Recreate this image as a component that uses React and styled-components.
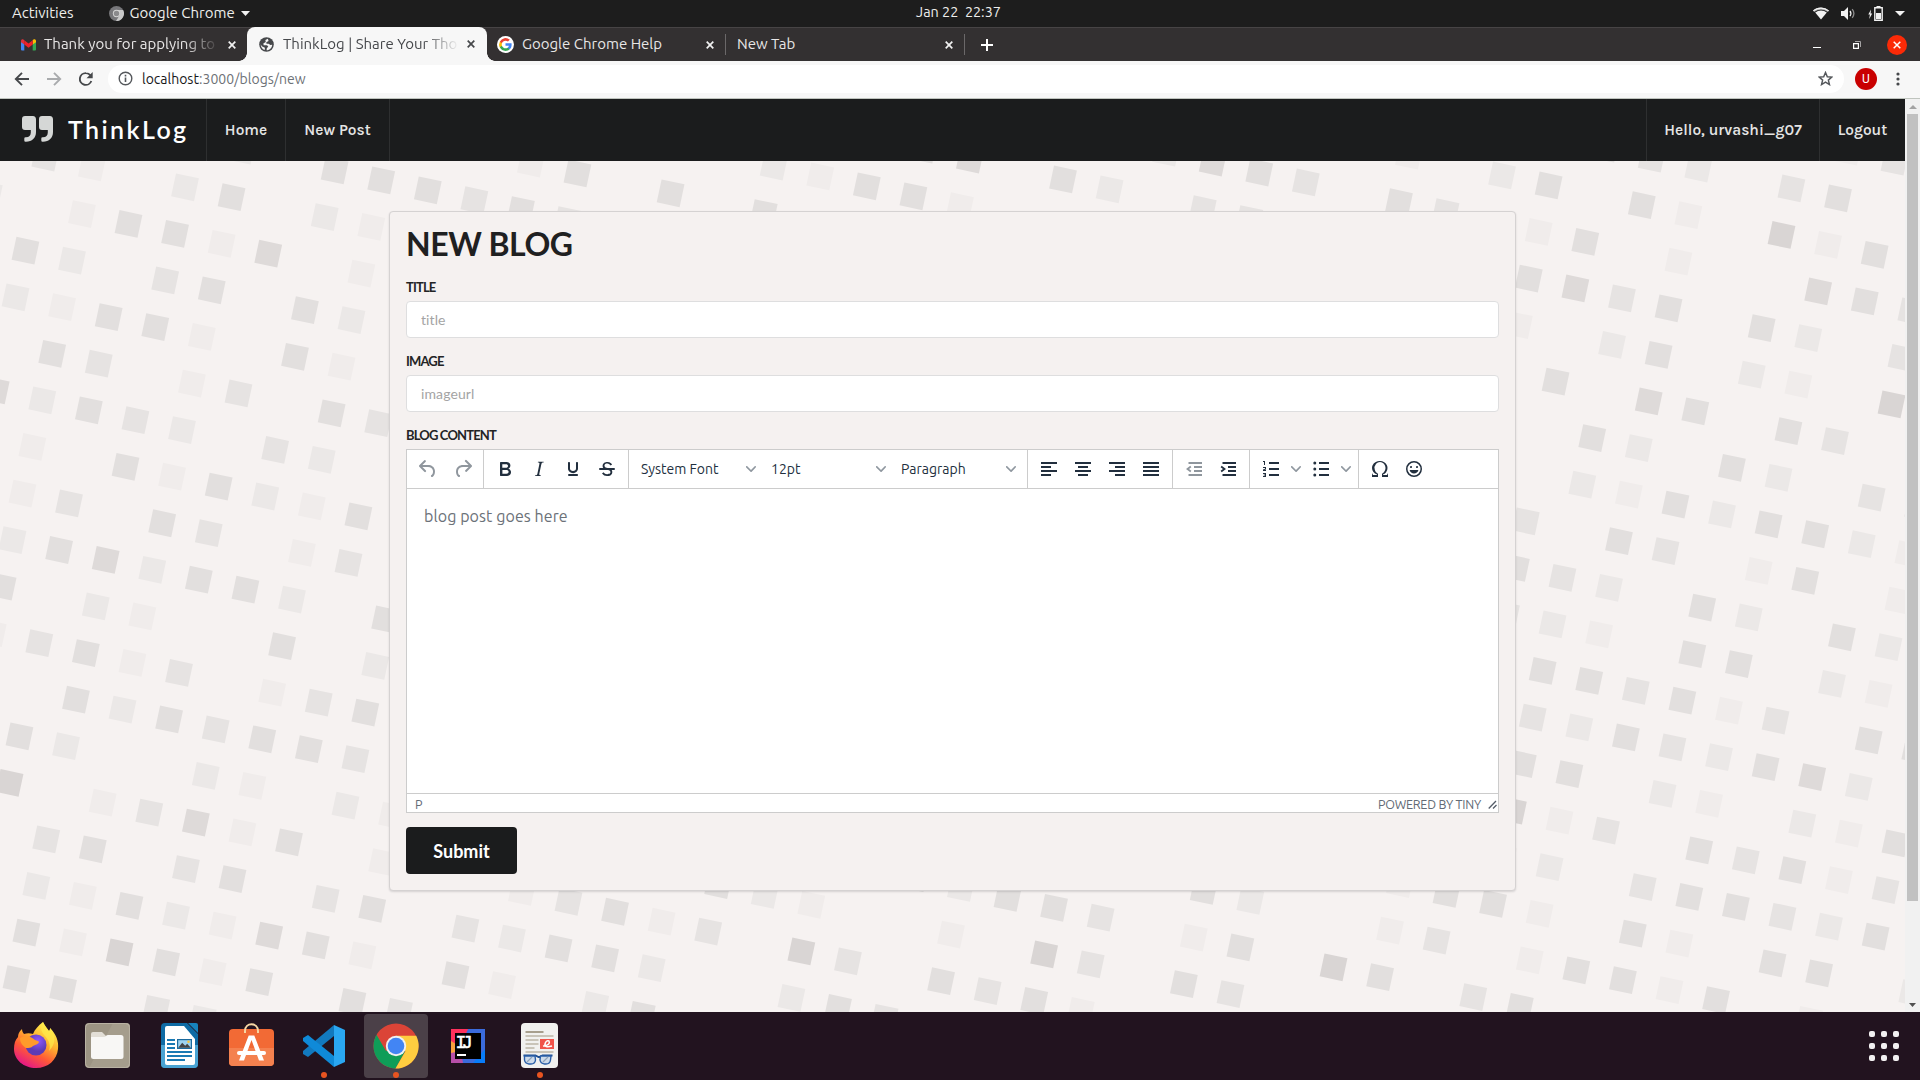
import React from "react";
import styled, { createGlobalStyle } from "styled-components";

const UI = `Ubuntu, "Noto Sans", "Open Sans", sans-serif`;
const LATO = `Lato, "Open Sans", sans-serif`;
const GROTESK = `Karla, Inter, "Liberation Sans", sans-serif`;

const GlobalStyle = createGlobalStyle`
  *, *::before, *::after { box-sizing: border-box; }
  html, body { margin: 0; padding: 0; overflow: hidden; }
  body { background: #f6f2f1; font-family: ${LATO}; }
`;

const Screen = styled.div`
  width: 1920px;
  height: 1080px;
  display: flex;
  flex-direction: column;
  overflow: hidden;
`;

const Label = styled.span`
  font-family: ${(p) => p.$font || UI};
  font-size: ${(p) => p.$size || 14}px;
  font-weight: ${(p) => p.$weight || 400};
  letter-spacing: ${(p) => p.$track || 0}px;
  color: ${(p) => p.$color || "inherit"};
  padding-bottom: ${(p) => p.$lift || 0}px;
  line-height: 1.2;
  white-space: pre;
`;

/* ---------- desktop top bar ---------- */
const TopBar = styled.header`
  height: 27px;
  flex: none;
  background: #1d1d1d;
  color: #eeeeec;
  display: grid;
  grid-template-columns: 1fr auto 1fr;
  align-items: center;
  padding: 0 15px 0 12px;
`;
const TopGroup = styled.div`
  display: flex;
  align-items: center;
  justify-content: ${(p) => (p.$end ? "flex-end" : "flex-start")};
`;
const AppMenu = styled.div`
  display: flex;
  align-items: center;
  margin-left: 35px;
  gap: 6px;
`;
const Tray = styled.div`
  display: flex;
  align-items: center;
  gap: 12px;
`;

/* ---------- browser chrome ---------- */
const TabStrip = styled.div`
  height: 34px;
  flex: none;
  background: #333031;
  border-top: 1px solid #474445;
  display: flex;
  align-items: stretch;
`;
const Tab = styled.div`
  width: ${(p) => p.$width}px;
  padding: 0 ${(p) => p.$right}px 0 ${(p) => p.$left}px;
  display: flex;
  align-items: center;
  color: ${(p) => (p.$active ? "#46484b" : "#e8e6e6")};
  background: ${(p) => (p.$active ? "#f7f7f7" : "transparent")};
  border-radius: 8px 8px 0 0;
  margin-top: ${(p) => (p.$active ? "-1px" : "0")};
  position: relative;
  ${(p) =>
    p.$active &&
    `
    &::before, &::after {
      content: ""; position: absolute; bottom: 0; width: 8px; height: 8px;
    }
    &::before { left: -8px; background: radial-gradient(circle at 0 0, transparent 7.5px, #f7f7f7 8px); }
    &::after { right: -8px; background: radial-gradient(circle at 100% 0, transparent 7.5px, #f7f7f7 8px); }
  `}
`;
const TabTitle = styled.div`
  flex: 1;
  min-width: 0;
  margin-left: ${(p) => p.$gap ?? 8}px;
  margin-right: 8px;
  padding-bottom: ${(p) => p.$lift ?? 2}px;
  display: flex;
  ${(p) => p.$fade && "mask-image: linear-gradient(90deg, #000 calc(100% - 36px), transparent);"}
`;
const Divider = styled.div`
  width: 1px;
  height: 21px;
  align-self: center;
  background: #6b6869;
`;
const NewTab = styled.div`
  width: 44px;
  display: flex;
  align-items: center;
  justify-content: center;
`;
const WindowButtons = styled.div`
  margin-left: auto;
  display: flex;
  align-items: center;
  gap: 32px;
  padding-right: 13px;
`;
const CloseButton = styled.div`
  width: 20px;
  height: 20px;
  border-radius: 50%;
  background: #fb2a07;
  display: flex;
  align-items: center;
  justify-content: center;
  margin-left: -6px;
`;
const Toolbar = styled.div`
  height: 38px;
  flex: none;
  background: #f7f7f7;
  border-bottom: 1px solid #bfc4be;
  display: flex;
  align-items: center;
  padding: 0 20px 1px 14px;
`;
const NavIcons = styled.div`
  display: flex;
  align-items: center;
  gap: 16px;
  width: 94px;
`;
const Omnibox = styled.div`
  flex: 1;
  height: 28px;
  margin-top: -1px;
  border-radius: 14px;
  background: #fff;
  display: flex;
  align-items: center;
  padding: 0 11px 0 10px;
`;
const Url = styled.div`
  margin-left: 9px;
  padding-top: 2px;
  flex: 1;
  display: flex;
`;
const Avatar = styled.div`
  width: 22px;
  height: 22px;
  border-radius: 50%;
  background: #c90000;
  margin: 0 19px 0 11px;
  display: flex;
  align-items: center;
  justify-content: center;
`;

/* ---------- page ---------- */
const Viewport = styled.div`
  height: 913px;
  flex: none;
  display: flex;
`;
const Page = styled.main`
  flex: 1;
  position: relative;
  background: #f6f2f1;
  overflow: hidden;
  display: flex;
  flex-direction: column;
`;
const Backdrop = styled.svg`
  position: absolute;
  left: 0;
  top: 0;
`;
const NavBar = styled.nav`
  height: 62px;
  flex: none;
  background: #1b1c1d;
  position: relative;
  display: flex;
  color: #e4e4e4;
`;
const NavItem = styled.a`
  width: ${(p) => p.$width}px;
  border-right: ${(p) => (p.$last ? "0" : "1px solid #2e2f30")};
  border-left: ${(p) => (p.$first ? "1px solid #2e2f30" : "0")};
  display: flex;
  align-items: center;
  justify-content: ${(p) => (p.$brand ? "flex-start" : "center")};
  padding: ${(p) => (p.$brand ? "0 0 2px 22px" : "0")};
  gap: 15px;
`;
const NavSpace = styled.div`
  flex: 1;
`;
const Card = styled.section`
  position: relative;
  width: 1127px;
  height: 680px;
  margin: 50px 0 0 389px;
  padding: 15px 16px 16px;
  background: #f5f1f0;
  border: 1px solid #d5d2d2;
  border-radius: 4px;
  box-shadow: 0 1px 2px 0 rgba(34, 36, 38, 0.15);
  display: flex;
  flex-direction: column;
`;
const Heading = styled.h1`
  margin: 0;
  height: 50px;
  flex: none;
  font: 700 32px/34px ${LATO};
  letter-spacing: -0.45px;
  color: #1f2021;
`;
const Field = styled.div`
  height: 74px;
  flex: none;
  display: flex;
  flex-direction: column;
`;
const FieldName = styled.label`
  height: 24px;
  flex: none;
  padding-top: 2px;
  font: 700 13px/17px ${LATO};
  letter-spacing: -0.85px;
  color: #232425;
  text-transform: uppercase;
`;
const Input = styled.input`
  height: 37px;
  width: 100%;
  border: 1px solid #dededf;
  border-radius: 4px;
  background: #fff;
  padding: 0 14px;
  font: 400 14px/17px ${LATO};
  letter-spacing: 0.1px;
  outline: none;
  &::placeholder { color: #a4a4a4; opacity: 1; }
`;
const Editor = styled.div`
  height: 364px;
  flex: none;
  border: 1px solid #ccc;
  background: #fff;
  display: flex;
  flex-direction: column;
  color: #222f3e;
`;
const EditorTools = styled.div`
  height: 39px;
  flex: none;
  display: flex;
  border-bottom: 1px solid #ccc;
`;
const ToolGroup = styled.div`
  width: ${(p) => p.$width}px;
  border-right: ${(p) => (p.$last ? "0" : "1px solid #ccc")};
  display: flex;
  align-items: center;
  padding-left: ${(p) => p.$left ?? 4}px;
`;
const Tool = styled.div`
  width: ${(p) => p.$width || 34}px;
  height: 34px;
  display: flex;
  align-items: center;
  justify-content: center;
  opacity: ${(p) => (p.$off ? 0.5 : 1)};
`;
const Select = styled.div`
  width: 130px;
  padding: 0 7px 0 8px;
  display: flex;
  align-items: center;
  justify-content: space-between;
`;
const EditorBody = styled.div`
  flex: 1;
  padding: 17px 17px;
`;
const StatusBar = styled.div`
  height: 19px;
  flex: none;
  border-top: 1px solid #ccc;
  display: flex;
  align-items: center;
  justify-content: space-between;
  padding: 2px 1px 0 8px;
  color: #626a75;
`;
const StatusEnd = styled.div`
  display: flex;
  align-items: center;
  gap: 7px;
`;
const SubmitButton = styled.button`
  width: 111px;
  height: 47px;
  margin-top: 14px;
  padding: 1px 0 0;
  border: 0;
  border-radius: 4px;
  background: #1b1c1d;
  color: #fff;
  font: 700 18px/20px ${LATO};
`;
const ScrollTrack = styled.div`
  width: 15px;
  background: #f1f1f1;
  display: flex;
  flex-direction: column;
  align-items: center;
  justify-content: space-between;
`;
const ScrollThumb = styled.div`
  width: 11px;
  height: 787px;
  margin: 0 0 auto;
  background: #c1c1c1;
`;
const ScrollArrow = styled.div`
  height: 15px;
  display: flex;
  align-items: center;
`;

/* ---------- dock ---------- */
const Dock = styled.footer`
  height: 68px;
  flex: none;
  background: #22131f;
  display: flex;
  align-items: center;
  justify-content: space-between;
  padding-right: 21px;
`;
const DockApps = styled.div`
  display: flex;
`;
const DockItem = styled.div`
  width: 72px;
  height: 68px;
  display: flex;
  align-items: center;
  justify-content: center;
  position: relative;
  &::after {
    content: "";
    display: ${(p) => (p.$running ? "block" : "none")};
    position: absolute;
    left: 33px;
    top: 60px;
    width: 6px;
    height: 6px;
    border-radius: 50%;
    background: #e95420;
  }
`;
const DockTile = styled.div`
  width: 64px;
  height: 64px;
  padding: 0 1px 1px 0;
  border-radius: 4px;
  background: ${(p) => (p.$focused ? "#4b4048" : "transparent")};
  display: flex;
  align-items: center;
  justify-content: center;
`;
const AppGrid = styled.div`
  display: grid;
  grid-template-columns: repeat(3, 6px);
  gap: 6px;
`;
const AppDot = styled.i`
  height: 6px;
  border-radius: 2px;
  background: #f2f0f1;
`;

/* ---------- backdrop of rotated squares ---------- */
// row -> column -> shade, where 1 is the faintest square and 6 the darkest
const CELLS = {
  "-8": { 34: 1, 35: 3 },
  "-7": { 29: 4, 30: 3, 31: 2, 33: 3, 34: 4 },
  "-6": { 25: 1, 27: 2, 28: 4, 30: 4, 31: 1, 33: 6, 34: 1, 35: 4 },
  "-5": { 20: 2, 21: 5, 22: 4, 23: 3, 25: 4, 26: 3, 28: 1, 29: 4, 31: 1, 34: 5, 35: 4, 36: 3 },
  "-4": { 15: 4, 16: 5, 18: 4, 19: 2, 21: 3, 22: 3, 28: 4, 29: 5, 30: 3, 31: 4, 33: 4, 34: 2, 36: 3 },
  "-3": { 12: 2, 13: 1, 14: 4, 15: 4, 16: 1, 28: 1, 30: 2, 31: 4, 33: 2, 34: 1, 36: 6 },
  "-2": { 7: 1, 8: 4, 10: 4, 12: 4, 29: 4, 31: 5, 32: 4, 34: 4, 35: 3 },
  "-1": { 1: 2, 3: 4, 4: 4, 5: 4, 6: 3, 7: 4, 8: 3, 30: 4, 31: 2, 33: 4, 34: 2, 36: 3, 37: 4 },
  0: { "-3": 3, "-2": 1, 0: 2, 1: 4, 3: 2, 4: 1, 30: 2, 31: 1, 32: 4, 33: 2, 34: 4, 35: 4, 36: 2, 37: 1 },
  1: { "-4": 2, "-2": 1, "-1": 4, 0: 4, 1: 1, 2: 5, 4: 1, 29: 3, 31: 4, 32: 3, 34: 1, 35: 4, 37: 1 },
  2: { "-3": 4, "-2": 2, 0: 3, 1: 4, 3: 4, 4: 2, 29: 4, 30: 3, 31: 2, 33: 4, 34: 2, 36: 4, 37: 2 },
  3: { "-3": 2, "-2": 1, "-1": 4, 0: 4, 1: 1, 3: 4, 4: 1, 29: 3, 30: 2, 31: 1, 33: 4, 34: 4, 36: 2, 37: 1 },
  4: { "-2": 4, "-1": 3, 1: 1, 2: 3, 4: 4, 5: 3, 30: 4, 31: 4, 32: 3, 33: 4, 34: 1, 35: 3, 37: 4, 38: 4 },
  5: { "-3": 5, "-2": 2, "-1": 4, 0: 3, 1: 2, 3: 3, 4: 2, 30: 3, 31: 2, 32: 4, 33: 3, 34: 2, 35: 4, 36: 5, 37: 2 },
  6: { "-2": 1, 0: 4, 1: 1, 2: 4, 3: 2, 4: 1, 5: 4, 30: 4, 31: 4, 33: 2, 34: 1, 36: 2, 37: 1, 38: 4 },
  7: { "-2": 1, "-1": 3, 1: 4, 2: 3, 4: 1, 5: 3, 30: 6, 31: 1, 32: 3, 34: 4, 35: 3, 36: 4, 37: 1, 38: 3 },
  8: { "-2": 2, "-1": 4, 0: 5, 1: 2, 2: 4, 3: 4, 4: 2, 6: 4, 30: 1, 31: 2, 33: 3, 34: 4, 35: 4, 36: 3, 37: 2, 38: 4 },
  9: { "-2": 4, 0: 2, 1: 1, 4: 4, 6: 2, 28: 1, 29: 4, 30: 4, 31: 1, 33: 4, 34: 1, 36: 4, 37: 4, 39: 2 },
  10: { "-2": 1, "-1": 3, 0: 4, 1: 1, 2: 3, 4: 1, 5: 3, 6: 4, 24: 4, 25: 2, 28: 1, 29: 3, 31: 1, 32: 4, 33: 4, 34: 1, 35: 4, 37: 1 },
  11: { 0: 4, 1: 2, 2: 4, 3: 3, 4: 4, 5: 4, 6: 3, 18: 4, 19: 2, 20: 4, 21: 4, 22: 3, 24: 1, 25: 4, 27: 6, 28: 4, 30: 3, 31: 4 },
  12: { "-1": 4, 0: 2, 3: 2, 4: 1, 6: 2, 7: 1, 14: 4, 15: 2, 16: 1, 19: 1, 21: 6, 22: 3, 24: 4, 25: 3 },
  13: { "-1": 6, 1: 1, 2: 3, 3: 5, 4: 1, 5: 4, 7: 1, 10: 1, 11: 3, 12: 4, 13: 1, 14: 3, 16: 6, 17: 3, 19: 4, 20: 3, 21: 4, 22: 1 },
  14: { 0: 3, 1: 4, 3: 3, 4: 4, 6: 3, 7: 4, 9: 3, 10: 2, 11: 4, 12: 4, 13: 2, 16: 2, 17: 4, 18: 3 },
  15: { 0: 2, 1: 1, 2: 4, 3: 2, 4: 1, 5: 5, 6: 4, 7: 1, 9: 4, 10: 1, 12: 2, 13: 4 },
  16: { 0: 4, 1: 1, 2: 6, 3: 4, 4: 1, 5: 4, 7: 4, 8: 3 },
  17: { 0: 4, 1: 4, 3: 3, 4: 2 },
};
const SHADES = ["", "#f0eceb", "#ebe8e7", "#e6e3e2", "#e2dfde", "#dedad9", "#d9d5d4"];
const STEP = 47.62;
const SIDE = 23.4;

function Squares() {
  const out = [];
  for (const j of Object.keys(CELLS)) {
    for (const i of Object.keys(CELLS[j])) {
      out.push(
        <rect key={i + "," + j} x={i * STEP - SIDE / 2} y={j * STEP - SIDE / 2} width={SIDE} height={SIDE} fill={SHADES[CELLS[j][i]]} />
      );
    }
  }
  return (
    <Backdrop width="1905" height="913" viewBox="0 99 1905 913">
      <g transform="translate(185 187.3) rotate(12.015)">{out}</g>
    </Backdrop>
  );
}

/* ---------- icons ---------- */
const TINY = {
  undo: "M6.4 8H12c3.7 0 6.2 2 6.8 5.1.6 2.7-.4 5.6-2.3 6.8a1 1 0 01-1-1.8c1.1-.6 1.8-2.7 1.4-4.6-.5-2.1-2.1-3.5-4.9-3.5H6.4l3.3 3.3a1 1 0 11-1.4 1.4l-5-5a1 1 0 010-1.4l5-5a1 1 0 011.4 1.4L6.4 8z",
  redo: "M17.6 10H12c-2.8 0-4.4 1.4-4.9 3.5-.4 2 .3 4 1.4 4.6a1 1 0 11-1 1.8c-2-1.2-2.9-4.1-2.3-6.8.6-3 3-5.1 6.8-5.1h5.6l-3.3-3.3a1 1 0 111.4-1.4l5 5a1 1 0 010 1.4l-5 5a1 1 0 01-1.4-1.4l3.3-3.3z",
  bold: "M7.8 19c-.3 0-.5 0-.6-.2l-.2-.5V5.7c0-.2 0-.4.2-.5l.6-.2h5c1.5 0 2.7.3 3.5 1 .7.6 1.1 1.4 1.1 2.5a3 3 0 01-.6 1.9c-.4.6-1 1-1.6 1.2.4.1.9.3 1.3.6s.8.7 1 1.2c.4.4.5 1 .5 1.6 0 1.3-.4 2.3-1.3 3-.8.7-2.1 1-3.8 1H7.8zm5-8.3c.6 0 1.2-.1 1.6-.5.4-.3.6-.7.6-1.3 0-1.1-.8-1.7-2.3-1.7H9.3v3.5h3.4zm.5 6c.7 0 1.3-.1 1.7-.4.4-.4.6-.9.6-1.5s-.2-1-.7-1.4c-.4-.3-1-.4-2-.4H9.4v3.8h4z",
  italic: "M16.7 4.7l-.1.9h-.3c-.6 0-1 0-1.4.3-.3.3-.4.6-.5 1.1l-2.1 9.8v.6c0 .5.4.8 1.4.8h.2l-.2.8H8l.2-.8h.2c1.1 0 1.8-.5 2-1.5l2-9.8.1-.5c0-.6-.4-.8-1.4-.8h-.3l.2-.9h5.8z",
  underline: "M16 5c.6 0 1 .4 1 1v5.5a4 4 0 01-.4 1.8l-1 1.4a5.3 5.3 0 01-5.5 1 5 5 0 01-1.6-1c-.5-.4-.8-.9-1.1-1.4a4 4 0 01-.4-1.8V6c0-.6.4-1 1-1s1 .4 1 1v5.5c0 .3 0 .6.2 1l.6.7a3.3 3.3 0 002.2.8 3.4 3.4 0 002.2-.8c.3-.2.4-.5.6-.8l.2-.9V6c0-.6.4-1 1-1zM8 17h8c.6 0 1 .4 1 1s-.4 1-1 1H8a1 1 0 010-2z",
  strike: "M15.6 8.5c-.5-.7-1-1.1-1.3-1.3-.6-.4-1.3-.6-2-.6-2.7 0-2.8 1.7-2.8 2.1 0 1.6 1.8 2 3.2 2.3 4.4.9 4.6 2.8 4.6 3.9 0 1.4-.7 4.1-5 4.1A6.2 6.2 0 017 16.4l1.5-1.1c.4.6 1.6 2 3.7 2 1.6 0 2.5-.4 3-1.2.4-.8.3-2-.8-2.6-.7-.4-1.6-.7-2.9-1-1-.2-3.9-.8-3.9-3.6C7.6 6 10.3 5 12.4 5c2.9 0 4.2 1.6 4.7 2.4l-1.5 1.1zM5 11h14a1 1 0 010 2H5a1 1 0 010-2z",
  left: "M4 5h16v2H4zM4 9h10v2H4zM4 13h16v2H4zM4 17h10v2H4z",
  center: "M4 5h16v2H4zM7 9h10v2H7zM4 13h16v2H4zM7 17h10v2H7z",
  right: "M4 5h16v2H4zM10 9h10v2H10zM4 13h16v2H4zM10 17h10v2H10z",
  justify: "M4 5h16v2H4zM4 9h16v2H4zM4 13h16v2H4zM4 17h16v2H4z",
  outdent: "M6.5 5H20v2H6.5zM12 9h8v2h-8zM12 13h8v2h-8zM6.5 17H20v2H6.5zM9.4 10.2L7 12l2.4 1.8-1.1 1.5L4 12l4.3-3.3z",
  indent: "M6.5 5H20v2H6.5zM12 9h8v2h-8zM12 13h8v2h-8zM6.5 17H20v2H6.5zM4.6 13.8L7 12l-2.4-1.8 1.1-1.5L10 12l-4.3 3.3z",
  ul: "M10 5h10v2H10zM10 11h10v2H10zM10 17h10v2H10zM4.3 6a1.5 1.5 0 103 0 1.5 1.5 0 10-3 0zM4.3 12a1.5 1.5 0 103 0 1.5 1.5 0 10-3 0zM4.3 18a1.5 1.5 0 103 0 1.5 1.5 0 10-3 0z",
  ol: "M10 5h10v2H10zM10 11h10v2H10zM10 17h10v2H10zM6 4v4H5V5H4V4zM4 10h3v2.5l-1.7.6H7v.9H4v-1.6l2-.7V11H4zM4 16h3v4H4v-1h2v-.6H4.7v-.8H6V17H4z",
  omega: "M15 18h4l1-2v4h-6v-3.3l1.4-1a6 6 0 001.8-2.9 6.3 6.3 0 00-.1-4.1 5.8 5.8 0 00-3-3.2c-.6-.3-1.3-.5-2.1-.5a5.1 5.1 0 00-3.9 1.8 6.3 6.3 0 00-1.3 6 6.2 6.2 0 001.8 3l1.4.9V20H4v-4l1 2h4v-.5l-2-1L5.4 15A6.5 6.5 0 014 11c0-1 .2-1.9.6-2.7A7 7 0 017.8 5 7.9 7.9 0 0112 4c1.5.1 3 .5 4.2 1.2a7 7 0 012.7 3.1c.4.8.6 1.7.6 2.7a6.5 6.5 0 01-1.4 4.2L17 16.5l-2 1v.5z",
  emoji: "M9 11c.6 0 1-.4 1-1s-.4-1-1-1a1 1 0 00-1 1c0 .6.4 1 1 1zm6 0c.6 0 1-.4 1-1s-.4-1-1-1a1 1 0 00-1 1c0 .6.4 1 1 1zm-3 5.5c2.1 0 4-1.5 4.4-3.5H7.6c.5 2 2.3 3.5 4.4 3.5zM12 4a8 8 0 100 16 8 8 0 000-16zm0 14.5a6.5 6.5 0 110-13 6.5 6.5 0 010 13z",
};
const TinyIcon = ({ name }) => (
  <svg width="24" height="24" viewBox="0 0 24 24">
    <path d={TINY[name]} fill="#222f3e" fillRule={name === "strike" ? "nonzero" : "evenodd"} />
  </svg>
);
const Chevron = () => (
  <svg width="10" height="10" viewBox="0 0 10 10">
    <path d="M8.7 2.2c.3-.3.8-.3 1 0 .4.4.4.9 0 1.2L5.7 7.8c-.3.3-.9.3-1.2 0L.2 3.4a.8.8 0 010-1.2c.3-.3.8-.3 1.1 0L5 6l3.7-3.8z" fill="#8f979f" />
  </svg>
);
const Caret = ({ w = 9, h = 5, color = "#f2f2f2", up }) => (
  <svg width={w} height={h} viewBox="0 0 10 5" preserveAspectRatio="none">
    <path d={up ? "M0 5h10L5 0z" : "M0 0h10L5 5z"} fill={color} />
  </svg>
);
const Cross = ({ color, size = 8, w = 1.7 }) => (
  <svg width={size} height={size} viewBox="0 0 8 8">
    <path d="M.7.7l6.6 6.6M7.3.7L.7 7.3" stroke={color} strokeWidth={w} />
  </svg>
);
const MiniChrome = () => (
  <svg width="15" height="15" viewBox="-8 -8 16 16">
    <circle r="8" fill="#77777a" />
    <path d="M0-3.8h7A8 8 0 01-.5 8L3.3 1.9z" fill="#c9c9c9" />
    <circle r="3.9" fill="#d6d6d6" />
    <circle r="2.9" fill="#8a8a8c" />
  </svg>
);
const Gmail = () => (
  <svg width="15" height="12" viewBox="0 0 15 12">
    <path d="M0 2.2V10.5A1 1 0 001 11.5H3.3V5z" fill="#4285f4" />
    <path d="M15 2.2V10.5A1 1 0 0114 11.5H11.7V5z" fill="#34a853" />
    <path d="M11.7 1.4V5.5L15 3.2V2C15 .3 13-.3 11.7 1z" fill="#fbbc04" />
    <path d="M3.3 1.2L7.5 4.4 11.7 1.2V5.5L7.5 8.7 3.3 5.5z" fill="#f0202a" />
    <path d="M0 2C0 .3 2-.3 3.3 1.2V5.5L0 3.2z" fill="#e0303a" />
  </svg>
);
const Globe = () => (
  <svg width="15" height="15" viewBox="0 0 16 16">
    <circle cx="8" cy="8" r="7.8" fill="#46484b" />
    <path d="M9.5 1.8L6.8 3.2l.4 2L4.6 6.8 5 8.7h3.6l1.3 1.6-1.5 1.3-.3 2.6c3.5-.2 5.9-2.8 6-6l-2 .3-1.8-1.2-2.3-.2-.2-1.6 2.4-1.3zM1.8 7.6c0 3 1.6 5.2 4.3 6.2l.2-2.3L3 9.8z" fill="#f7f7f7" />
  </svg>
);
const GoogleG = () => (
  <svg width="17" height="17" viewBox="-3 -3 24 24">
    <circle cx="9" cy="9" r="12" fill="#fff" />
    <path d="M17.64 9.2c0-.64-.06-1.25-.16-1.84H9v3.48h4.84a4.14 4.14 0 01-1.8 2.72v2.26h2.92c1.7-1.57 2.68-3.88 2.68-6.62z" fill="#4285f4" />
    <path d="M9 18c2.43 0 4.47-.8 5.96-2.18l-2.92-2.26c-.8.54-1.84.86-3.04.86-2.34 0-4.33-1.58-5.04-3.7H.96v2.33A9 9 0 009 18z" fill="#34a853" />
    <path d="M3.96 10.71a5.4 5.4 0 010-3.42V4.96H.96a9 9 0 000 8.08z" fill="#fbbc05" />
    <path d="M9 3.58c1.32 0 2.5.45 3.44 1.35l2.58-2.59A9 9 0 00.96 4.96l3 2.33C4.67 5.16 6.66 3.58 9 3.58z" fill="#ea4335" />
  </svg>
);
const Wifi = () => (
  <svg width="16" height="13" viewBox="0 0 16 13">
    <path d="M8 .6C5 .6 2.2 1.7 0 3.5l1.3 1.6a10.7 10.7 0 0113.4 0L16 3.5A12.6 12.6 0 008 .6z" fill="#a7a7a7" />
    <path d="M8 .6C5 .6 2.2 1.7 0 3.5l.7.8a11.6 11.6 0 0114.6 0l.7-.8A12.6 12.6 0 008 .6z" fill="#f2f2f2" />
    <path d="M8 12.6l5.8-7.1a9.3 9.3 0 00-11.6 0z" fill="#f2f2f2" />
  </svg>
);
const Volume = () => (
  <svg width="15" height="13" viewBox="0 0 15 13">
    <path d="M0 4h3l4-4v13L3 9H0z" fill="#f2f2f2" />
    <path d="M9 4q1.8 2.5 0 5" stroke="#f2f2f2" strokeWidth="1.3" fill="none" />
    <path d="M11.2 2.2q3.4 4.3 0 8.6" stroke="#8b8b8b" strokeWidth="1.3" fill="none" />
  </svg>
);
const Battery = () => (
  <svg width="15" height="15" viewBox="0 0 15 15">
    <path d="M3 3.5L.3 8.5h1.6L1.2 13 4.2 7.5H2.6z" fill="#f2f2f2" />
    <path d="M6.8 1.7h7.4v12.5H6.8z" fill="none" stroke="#f2f2f2" strokeWidth="1.4" />
    <path d="M8.5 0h4v1.5h-4zM8 7h5v6H8z" fill="#f2f2f2" />
  </svg>
);
const QuoteMark = () => (
  <svg width="31" height="26" viewBox="0 0 31 26">
    <path d="M3 0H10.5A3.4 3.4 0 0114 3.4V16C14 22 10 25.7 4 25.7H3.5A1.2 1.2 0 012.3 24.5V22.5A1.2 1.2 0 013.5 21.3H4C7 21.3 8.8 19.5 8.8 16.5V14H3A3 3 0 010 11V3A3 3 0 013 0z" fill="#d5d7d6" />
    <path d="M20 0H27.5A3.4 3.4 0 0131 3.4V16C31 22 27 25.7 21 25.7H20.5A1.2 1.2 0 0119.3 24.5V22.5A1.2 1.2 0 0120.5 21.3H21C24 21.3 25.8 19.5 25.8 16.5V14H20A3 3 0 0117 11V3A3 3 0 0120 0z" fill="#d5d7d6" />
  </svg>
);
const Arrow = ({ color, flip }) => (
  <svg width="16" height="16" viewBox="0 0 16 16" transform={flip ? "scale(-1 1)" : undefined}>
    <path d="M15 8H2.2M8 1.8L1.8 8 8 14.2" fill="none" stroke={color} strokeWidth="1.9" />
  </svg>
);
const Reload = () => (
  <svg width="16" height="16" viewBox="0 0 16 16">
    <path d="M13.3 10A5.9 5.9 0 118 2.1c1.9 0 3.3.8 4.5 2.2" fill="none" stroke="#46484b" strokeWidth="1.9" />
    <path d="M14.7 1v6.2H8.5z" fill="#46484b" />
  </svg>
);
const Info = () => (
  <svg width="15" height="15" viewBox="0 0 15 15">
    <circle cx="7.5" cy="7.5" r="6.3" fill="none" stroke="#55585c" strokeWidth="1.4" />
    <path d="M6.7 6.6h1.6V11H6.7zM6.7 3.8h1.6v1.6H6.7z" fill="#55585c" />
  </svg>
);
const Star = () => (
  <svg width="15" height="15" viewBox="0 0 24 24">
    <path d="M12 2.5l2.9 6.7 7.2.6-5.5 4.8 1.7 7.1L12 17.9l-6.3 3.8 1.7-7.1L1.9 9.8l7.2-.6z" fill="none" stroke="#55585c" strokeWidth="2.4" />
  </svg>
);

const Firefox = () => (
  <svg width="46" height="54" viewBox="0 0 46 54">
    <defs>
      <linearGradient id="ffo" x1=".8" y1=".1" x2=".3" y2="1">
        <stop offset="0" stopColor="#fff04f" />
        <stop offset=".35" stopColor="#ffb02e" />
        <stop offset=".65" stopColor="#ff5a36" />
        <stop offset="1" stopColor="#e3158a" />
      </linearGradient>
      <radialGradient id="ffp" cx=".6" cy=".3">
        <stop offset="0" stopColor="#9059ff" />
        <stop offset="1" stopColor="#5b3bb5" />
      </radialGradient>
    </defs>
    <path d="M30 3c2 4 4 6 6 9 1-1 1-2 1-3 6 6 9 13 8 21-1 11-10 19-22 19S1 41 1 30c0-5 1-9 4-12 0-3 1-5 4-8 0 2 1 4 2 5 3-1 6-1 9 0 2-5 5-8 10-12z" fill="url(#ffo)" />
    <path d="M30 3c-3 5-2 10 2 14 4 5 6 9 4 15 5-5 7-12 4-18-1-2-2-4-3-5 0 1 0 2-1 3-2-3-4-5-6-9z" fill="#ffe84a" opacity=".75" />
    <circle cx="23" cy="26" r="10.5" fill="url(#ffp)" />
    <path d="M7 19c5-3 11-2 15 2 2 1 4 1 4 2-1 3-5 3-6 4-2 2-4 2-7 2-3-2-6-5-6-10z" fill="#ff9b2a" />
  </svg>
);
const Files = () => (
  <svg width="45" height="45" viewBox="0 0 45 45">
    <rect width="45" height="45" rx="4" fill="#9c9483" />
    <path d="M28 0h13a4 4 0 014 4v37a4 4 0 01-4 4H4z" fill="#a59d8c" />
    <rect x=".5" y=".5" width="44" height="44" rx="4" fill="none" stroke="#b9b2a3" />
    <path d="M6 11a2 2 0 012-2h9l5 5H6z" fill="#e2ded6" />
    <path d="M6 14h13c2 0 2-2 4-2h13a2.5 2.5 0 012.5 2.5v19A2.5 2.5 0 0136 36H8.5A2.5 2.5 0 016 33.5z" fill="#f8f7f5" />
  </svg>
);
const Writer = () => (
  <svg width="37" height="45" viewBox="0 0 37 45">
    <path d="M4 0h22l11 11v30a4 4 0 01-4 4H4a4 4 0 01-4-4V4a4 4 0 014-4z" fill="#0e6ba5" />
    <path d="M0 22h37v19a4 4 0 01-4 4H4a4 4 0 01-4-4z" fill="#49a3d3" />
    <path d="M27 0h8a2 2 0 012 2v8z" fill="#1783bd" />
    <path d="M6 3h17l11 13v24a2 2 0 01-2 2H6a2 2 0 01-2-2V5a2 2 0 012-2z" fill="#fff" />
    <path d="M6 16h8v2H6zM6 20h8v2H6zM6 24h8v2H6zM6 28h25v2H6zM6 32h25v2H6zM6 36h18v2H6z" fill="#1a7ab4" />
    <path d="M16 16h15v10H16z" fill="#1a6a9e" />
    <path d="M17.2 17.2h12.6v7.6H17.2z" fill="#9ed3f0" />
    <path d="M17.2 24.8l4-5 3 3 2-2 3.6 4z" fill="#444" />
    <circle cx="27.5" cy="18.8" r="1.3" fill="#f5c542" />
  </svg>
);
const Software = () => (
  <svg width="45" height="53" viewBox="0 0 45 53">
    <rect y="10" width="45" height="37" rx="4" fill="#f26a35" />
    <path d="M0 29h45v14a4 4 0 01-4 4H4a4 4 0 01-4-4z" fill="#f4814f" />
    <path d="M16 14v-2c0-9 13-9 13 0v2" fill="none" stroke="#f6d7a4" strokeWidth="2" />
    <path d="M19.7 16.5h5.6L35 41.5h-5L22.5 21 15 41.5h-5z" fill="#fff" />
    <rect x="8" y="32" width="29" height="4" rx="2" fill="#fff" />
  </svg>
);
const Code = () => (
  <svg width="42" height="42" viewBox="0 0 42 42">
    <path d="M31 0L42 5v32L31 42z" fill="#2aa7f2" />
    <path d="M31 11L5 32 0 29v-3L31 0z" fill="#1279be" />
    <path d="M31 31L5 10 0 13v3l31 26z" fill="#0f8ad8" />
  </svg>
);
const Chrome = () => (
  <svg width="46" height="46" viewBox="-23 -23 46 46">
    <circle r="22.5" fill="#db4437" />
    <path d="M-19.5-11.2A22.5 22.5 0 00-.5 22.5L9 5.5 0 0-10 5z" fill="#0f9d58" />
    <path d="M20.2-10.2H0L9.4 5.2-.5 22.5A22.5 22.5 0 0020.2-10.2z" fill="#ffcd40" />
    <circle r="10.2" fill="#f1f1f1" />
    <circle r="8.3" fill="#4285f4" />
  </svg>
);
const Idea = () => (
  <svg width="34" height="34" viewBox="0 0 34 34">
    <path d="M0 0h34v34H0z" fill="#3b6bdc" />
    <path d="M0 0h17L8 20 0 17z" fill="#fe315d" />
    <path d="M0 12l8 5-2 8-6 1z" fill="#f9a03c" />
    <path d="M0 24l10-2 2 12H0z" fill="#b74fa8" />
    <path d="M22 34l12-14v14z" fill="#087cfa" />
    <path d="M4 4h26v26H4z" fill="#000" />
    <path d="M6 25h9v2H6z" fill="#fff" />
    <text x="4.5" y="18.5" fill="#fff" fontFamily="'Liberation Mono', monospace" fontSize="18" stroke="#fff" strokeWidth=".5" textLength="17">IJ</text>
  </svg>
);
const Viewer = () => (
  <svg width="37" height="45" viewBox="0 0 37 45">
    <rect width="37" height="45" rx="4" fill="#f1f1ef" />
    <path d="M4.5 8h18v2h-18z" fill="#a79f8d" />
    <path d="M4.5 12h28v2h-28zM4.5 16h13v2h-13zM4.5 20h13v2h-13zM4.5 24h9v2h-9zM4.5 28h28v2h-28z" fill="#c9c4b8" />
    <path d="M19 16h14v10H19z" fill="#f0544a" />
    <path d="M22 23q8-1 6-5-3-1-4 3t7 2" fill="none" stroke="#fff" strokeWidth="1.5" />
    <path d="M2.5 32.5h12l3 1.5h1l3-1.5h10" fill="none" stroke="#1f4f91" strokeWidth="1.8" />
    <path d="M3.5 33h10.5l.5 4q-.5 4-4.5 4h-2q-4-.5-4.5-4zM19.5 33h10.5l-.5 4q-.5 4-4.5 4h-1.5q-4-.5-4.5-4z" fill="#cddbea" stroke="#2a5fa8" strokeWidth="1.4" />
    <path d="M6 39l5-5M22 39l5-5" stroke="#8ea3ba" strokeWidth="1.2" />
  </svg>
);

const DOCK = [
  { Icon: Firefox },
  { Icon: Files },
  { Icon: Writer },
  { Icon: Software },
  { Icon: Code, running: true },
  { Icon: Chrome, running: true, focused: true },
  { Icon: Idea },
  { Icon: Viewer, running: true },
];

export default function App() {
  return (
    <Screen>
      <GlobalStyle />
      <TopBar>
        <TopGroup>
          <Label $size={15} $lift={1}>Activities</Label>
          <AppMenu>
            <MiniChrome />
            <Label $size={15} $lift={1}>Google Chrome</Label>
            <Caret />
          </AppMenu>
        </TopGroup>
        <Label $size={14.4} $lift={1}>Jan 22  22:37</Label>
        <TopGroup $end>
          <Tray>
            <Wifi />
            <Volume />
            <Battery />
            <Caret w={10} />
          </Tray>
        </TopGroup>
      </TopBar>

      <TabStrip>
        <Tab $width={247} $left={21} $right={11}>
          <Gmail />
          <TabTitle $fade><Label $size={15}>Thank you for applying to</Label></TabTitle>
          <Cross color="#f1f1f1" />
        </Tab>
        <Tab $active $width={240} $left={12} $right={12}>
          <Globe />
          <TabTitle $gap={9} $lift={0} $fade><Label $size={15}>ThinkLog | Share Your Tho</Label></TabTitle>
          <Cross color="#46484b" />
        </Tab>
        <Tab $width={238} $left={10} $right={11}>
          <GoogleG />
          <TabTitle><Label $size={15}>Google Chrome Help</Label></TabTitle>
          <Cross color="#f1f1f1" />
        </Tab>
        <Divider />
        <Tab $width={238} $left={11} $right={11}>
          <TabTitle $gap={0}><Label $size={15}>New Tab</Label></TabTitle>
          <Cross color="#f1f1f1" />
        </Tab>
        <Divider />
        <NewTab>
          <svg width="12" height="12" viewBox="0 0 12 12"><path d="M6 0v12M0 6h12" stroke="#fff" strokeWidth="2" /></svg>
        </NewTab>
        <WindowButtons>
          <svg width="8" height="8" viewBox="0 0 8 8"><path d="M0 6.5h8" stroke="#fff" /></svg>
          <svg width="8" height="8" viewBox="0 0 8 8">
            <path d="M.6 2.6h4.8v4.8H.6z" fill="none" stroke="#fff" strokeWidth="1.2" />
            <path d="M2 .5h5.5V6" fill="none" stroke="#a5a3a4" />
          </svg>
          <CloseButton><Cross color="#fff" w={1.5} /></CloseButton>
        </WindowButtons>
      </TabStrip>

      <Toolbar>
        <NavIcons>
          <Arrow color="#46484b" />
          <Arrow color="#a9abad" flip />
          <Reload />
        </NavIcons>
        <Omnibox>
          <Info />
          <Url>
            <Label $size={14} $color="#17181a">localhost</Label>
            <Label $size={14} $track={0.05} $color="#6d7176">:3000/blogs/new</Label>
          </Url>
          <Star />
        </Omnibox>
        <Avatar><Label $size={12} $color="#fff" $font="Roboto, sans-serif">U</Label></Avatar>
        <svg width="4" height="14" viewBox="0 0 4 14">
          <circle cx="2" cy="2" r="1.6" fill="#46484b" />
          <circle cx="2" cy="7" r="1.6" fill="#46484b" />
          <circle cx="2" cy="12" r="1.6" fill="#46484b" />
        </svg>
      </Toolbar>

      <Viewport>
        <Page>
          <Squares />
          <NavBar>
            <NavItem $brand $width={207}>
              <QuoteMark />
              <Label $font={LATO} $size={25} $track={2.4} $weight={600} $color="#fff">ThinkLog</Label>
            </NavItem>
            <NavItem $width={79}><Label $font={GROTESK} $size={15.5} $weight={600}>Home</Label></NavItem>
            <NavItem $width={104}><Label $font={GROTESK} $size={15.5} $weight={600}>New Post</Label></NavItem>
            <NavSpace />
            <NavItem $first $width={174}><Label $font={GROTESK} $size={15.5} $weight={600}>Hello, urvashi_g07</Label></NavItem>
            <NavItem $last $width={85}><Label $font={GROTESK} $size={15.5} $weight={600}>Logout</Label></NavItem>
          </NavBar>
          <Card>
            <Heading>NEW BLOG</Heading>
            <Field>
              <FieldName>Title</FieldName>
              <Input placeholder="title" />
            </Field>
            <Field>
              <FieldName>Image</FieldName>
              <Input placeholder="imageurl" />
            </Field>
            <FieldName>Blog Content</FieldName>
            <Editor>
              <EditorTools>
                <ToolGroup $width={77} $left={3}>
                  <Tool $width={36} $off><TinyIcon name="undo" /></Tool>
                  <Tool $width={34} $off><TinyIcon name="redo" /></Tool>
                </ToolGroup>
                <ToolGroup $width={145}>
                  <Tool><TinyIcon name="bold" /></Tool>
                  <Tool><TinyIcon name="italic" /></Tool>
                  <Tool><TinyIcon name="underline" /></Tool>
                  <Tool><TinyIcon name="strike" /></Tool>
                </ToolGroup>
                <ToolGroup $width={399}>
                  <Select><Label $size={14}>System Font</Label><Chevron /></Select>
                  <Select><Label $size={14}>12pt</Label><Chevron /></Select>
                  <Select><Label $size={14}>Paragraph</Label><Chevron /></Select>
                </ToolGroup>
                <ToolGroup $width={145}>
                  <Tool><TinyIcon name="left" /></Tool>
                  <Tool><TinyIcon name="center" /></Tool>
                  <Tool><TinyIcon name="right" /></Tool>
                  <Tool><TinyIcon name="justify" /></Tool>
                </ToolGroup>
                <ToolGroup $width={77}>
                  <Tool $off><TinyIcon name="outdent" /></Tool>
                  <Tool><TinyIcon name="indent" /></Tool>
                </ToolGroup>
                <ToolGroup $width={109}>
                  <Tool><TinyIcon name="ol" /></Tool>
                  <Tool $width={16}><Chevron /></Tool>
                  <Tool><TinyIcon name="ul" /></Tool>
                  <Tool $width={16}><Chevron /></Tool>
                </ToolGroup>
                <ToolGroup $last $width={80}>
                  <Tool><TinyIcon name="omega" /></Tool>
                  <Tool><TinyIcon name="emoji" /></Tool>
                </ToolGroup>
              </EditorTools>
              <EditorBody><Label $size={16} $track={0.08} $color="#6b7178">blog post goes here</Label></EditorBody>
              <StatusBar>
                <Label $size={12.5}>P</Label>
                <StatusEnd>
                  <Label $size={12.5} $track={-0.22}>POWERED BY TINY</Label>
                  <svg width="9" height="9" viewBox="0 0 9 9"><path d="M.7 8.5L8 1M5 8.5L8.5 5" stroke="#555d69" strokeWidth="1.3" /></svg>
                </StatusEnd>
              </StatusBar>
            </Editor>
            <SubmitButton>Submit</SubmitButton>
          </Card>
        </Page>
        <ScrollTrack>
          <ScrollArrow><Caret up w={8} h={4} color="#a3a3a3" /></ScrollArrow>
          <ScrollThumb />
          <ScrollArrow><Caret w={7} h={4} color="#505050" /></ScrollArrow>
        </ScrollTrack>
      </Viewport>

      <Dock>
        <DockApps>
          {DOCK.map(({ Icon, running, focused }, k) => (
            <DockItem key={k} $running={running}>
              <DockTile $focused={focused}><Icon /></DockTile>
            </DockItem>
          ))}
        </DockApps>
        <AppGrid>
          {Array.from({ length: 9 }, (_, k) => <AppDot key={k} />)}
        </AppGrid>
      </Dock>
    </Screen>
  );
}
